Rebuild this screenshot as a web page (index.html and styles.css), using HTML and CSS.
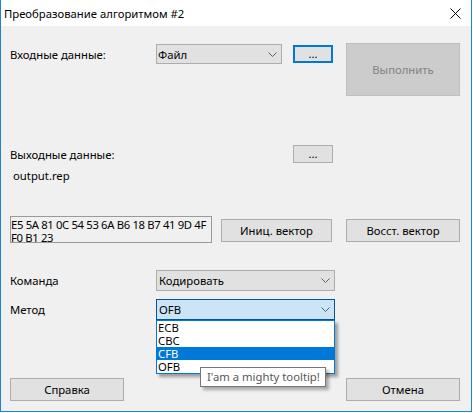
FILE: index.html
```html
<!DOCTYPE html>
<html lang="ru">
<head>
<meta charset="utf-8">
<title>Преобразование алгоритмом #2</title>
<link rel="stylesheet" href="styles.css">
</head>
<body>
<div class="window">
  <div class="titlebar">
    <span class="title">Преобразование алгоритмом #2</span>
    <svg class="close" width="11" height="11" viewBox="0 0 11 11"><path d="M0.5 0.5 L10.5 10.5 M10.5 0.5 L0.5 10.5" stroke="#000" stroke-width="1" fill="none"/></svg>
  </div>
  <div class="client">
    <div class="row row-input">
      <div class="input-group">
        <span class="label">Входные данные:</span>
        <div class="combo combo-file"><span>Файл</span><svg class="chev" width="9" height="5" viewBox="0 0 9 5"><polyline points="0.5,0.5 4.5,4.5 8.5,0.5" fill="none" stroke="#606060" stroke-width="1"/></svg></div>
        <button class="btn btn-dots btn-focus">...</button>
      </div>
      <button class="btn btn-run" disabled>Выполнить</button>
    </div>
    <div class="row row-output">
      <span class="label label-output">Выходные данные:</span>
      <button class="btn btn-dots">...</button>
    </div>
    <div class="filename">output.rep</div>
    <div class="row row-vector">
      <div class="hexbox"><span class="hexline">E5 5A 81 0C 54 53 6A B6 18 B7 41 9D 4F</span><span class="hexline">F0 B1 23</span></div>
      <button class="btn btn-init">Иниц. вектор</button>
      <button class="btn btn-restore">Восст. вектор</button>
    </div>
    <div class="row row-command">
      <span class="label">Команда</span>
      <div class="combo combo-wide"><span>Кодировать</span><svg class="chev" width="9" height="5" viewBox="0 0 9 5"><polyline points="0.5,0.5 4.5,4.5 8.5,0.5" fill="none" stroke="#606060" stroke-width="1"/></svg></div>
    </div>
    <div class="row row-method">
      <span class="label">Метод</span>
      <div class="method-wrap">
        <div class="combo combo-wide combo-active"><span>OFB</span><svg class="chev" width="9" height="5" viewBox="0 0 9 5"><polyline points="0.5,0.5 4.5,4.5 8.5,0.5" fill="none" stroke="#606060" stroke-width="1"/></svg></div>
        <div class="dropdown">
          <div class="item">ECB</div>
          <div class="item">CBC</div>
          <div class="item selected">CFB</div>
          <div class="item">OFB</div>
        </div>
        <div class="tooltip">I'am a mighty tooltip!</div>
      </div>
    </div>
    <div class="row row-bottom">
      <button class="btn btn-wide">Справка</button>
      <button class="btn btn-wide">Отмена</button>
    </div>
  </div>
</div>
</body>
</html>
```

FILE: styles.css
```css
body {
  margin: 0;
  background: #ffffff;
  font-family: "Noto Sans", sans-serif;
  font-size: 11.3px;
  color: #000;
}

.window {
  width: 472px;
  height: 412px;
  box-sizing: border-box;
  border: 1px solid #1883d7;
  border-top: none;
  display: flex;
  flex-direction: column;
  background: #f0f0f0;
}

.titlebar {
  height: 26px;
  flex: none;
  background: #fff;
  display: flex;
  align-items: center;
  padding-left: 3px;
}

.title {
  flex: 1;
}

.close {
  display: block;
  margin-right: 10px;
}

.client {
  flex: 1;
  padding: 0 11px 0 9px;
  display: flex;
  flex-direction: column;
}

.row {
  display: flex;
  align-items: center;
  flex: none;
}

.label {
  width: 146px;
  flex: none;
}

.combo {
  box-sizing: border-box;
  display: flex;
  align-items: center;
  justify-content: space-between;
  background: #e1e1e1;
  border: 1px solid #adadad;
  padding: 0 4px 0 2px;
  flex: none;
}

.chev {
  display: block;
}

.btn {
  box-sizing: border-box;
  background: #e1e1e1;
  border: 1px solid #adadad;
  font: inherit;
  color: #000;
  padding: 0;
  margin: 0;
  flex: none;
}

.row-input {
  margin-top: 17px;
  height: 53px;
  align-items: flex-start;
}

.input-group {
  display: flex;
  align-items: center;
  height: 20px;
  margin-top: 1px;
}

.combo-file {
  width: 126px;
  height: 20px;
  padding-left: 1px;
}

.btn-dots {
  width: 40px;
  height: 18px;
  line-height: 12px;
}

.input-group .btn-dots {
  margin-left: 11px;
}

.btn-focus {
  border: 2px solid #0078d7;
}

.btn-run {
  margin-left: auto;
  width: 114px;
  height: 53px;
  background: #cccccc;
  border-color: #bfbfbf;
  color: #838383;
}

.row-output {
  margin-top: 49px;
  height: 18px;
}

.label-output {
  width: 283px;
}

.filename {
  margin-top: 6px;
  height: 14px;
  line-height: 14px;
  padding-left: 3px;
}

.row-vector {
  margin-top: 33px;
  height: 27px;
  align-items: flex-start;
}

.hexbox {
  width: 202px;
  height: 27px;
  box-sizing: border-box;
  border: 1px solid #9a9a9a;
  overflow: hidden;
  line-height: 13px;
  padding-top: 1px;
  letter-spacing: -0.35px;
  flex: none;
}

.hexline {
  display: block;
  white-space: nowrap;
}

.btn-init {
  margin-top: 3px;
  margin-left: 9px;
  width: 111px;
  height: 23px;
}

.btn-restore {
  margin-top: 3px;
  margin-left: auto;
  width: 114px;
  height: 23px;
}

.row-command {
  margin-top: 27px;
  height: 21px;
}

.combo-wide {
  width: 179px;
  height: 21px;
}

.row-method {
  margin-top: 8px;
  height: 21px;
}

.method-wrap {
  position: relative;
}

.combo-active {
  background: #cce4f7;
  border-color: #005499;
}

.dropdown {
  position: absolute;
  left: 0;
  top: 100%;
  width: 179px;
  box-sizing: border-box;
  border: 1px solid #0078d7;
  background: #fff;
  box-shadow: 3px 3px 3px rgba(0, 0, 0, 0.35);
  z-index: 2;
}

.item {
  height: 13px;
  line-height: 13px;
  padding-left: 1px;
}

.item.selected {
  background: #0078d7;
  color: #fff;
}

.tooltip {
  position: absolute;
  left: 44px;
  top: 68px;
  width: 126px;
  height: 20px;
  box-sizing: border-box;
  border: 1px solid #767676;
  background: #fff;
  color: #575757;
  padding-left: 6px;
  line-height: 18px;
  white-space: nowrap;
  box-shadow: 3px 3px 3px rgba(0, 0, 0, 0.3);
  z-index: 3;
}

.row-bottom {
  margin-top: 58px;
  height: 23px;
  justify-content: space-between;
}

.btn-wide {
  width: 114px;
  height: 23px;
}
```
